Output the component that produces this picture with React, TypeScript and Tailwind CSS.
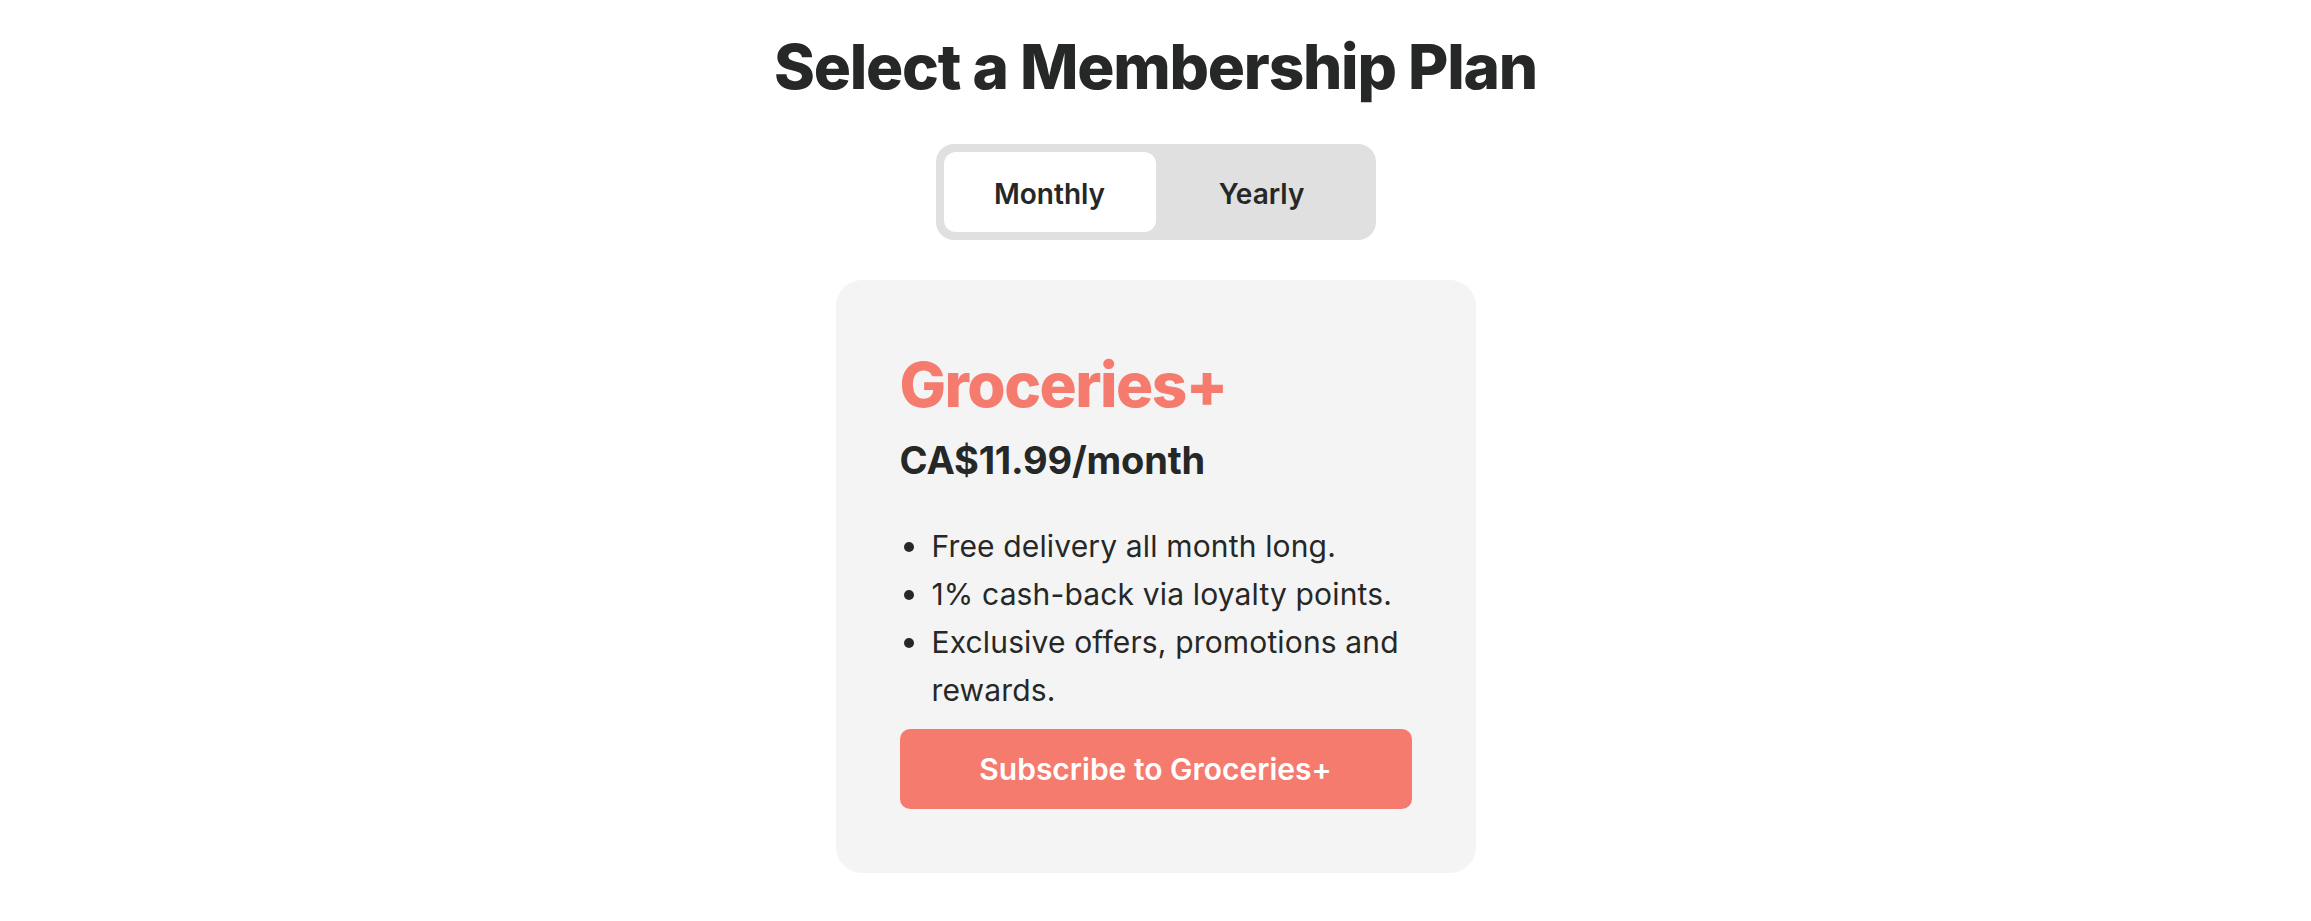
import React, { useState } from "react";

const features = [
  "Free delivery all month long.",
  "1% cash-back via loyalty points.",
  "Exclusive offers, promotions and rewards.",
];

export default function App() {
  const [period, setPeriod] = useState<"monthly" | "yearly">("monthly");

  return (
    <div className="min-h-screen bg-white flex flex-col items-center pt-[36px] text-[#262827] font-['Inter',sans-serif]">
      <h1 className="text-[62px] leading-none font-extrabold tracking-[-0.02em]">
        Select a Membership Plan
      </h1>

      {/* billing period toggle */}
      <div className="mt-[46px] flex p-2 rounded-[18px] bg-[#e0e0e0]">
        <button
          onClick={() => setPeriod("monthly")}
          className={`w-[212px] h-[80px] pt-[3px] rounded-[12px] text-[28px] font-semibold ${period === "monthly" ? "bg-white" : ""}`}
        >
          Monthly
        </button>
        <button
          onClick={() => setPeriod("yearly")}
          className={`w-[212px] h-[80px] pt-[3px] rounded-[12px] text-[28px] font-semibold ${period === "yearly" ? "bg-white" : ""}`}
        >
          Yearly
        </button>
      </div>

      {/* plan card */}
      <div className="mt-[40px] w-[640px] bg-[#f4f4f4] rounded-[26px] pt-[74px] px-16 pb-16">
        <h2 className="text-[62px] leading-none font-extrabold tracking-[-0.025em] text-[#f67b6f]">
          Groceries+
        </h2>
        <div className="mt-[25px] text-[38px] leading-none font-bold tracking-[-0.005em]">
          {period === "monthly" ? "CA$11.99/month" : "CA$119.99/year"}
        </div>
        <ul className="mt-[43px] text-[30px] leading-[48px] tracking-[0.005em]">
          {features.map((f) => (
            <li key={f} className="flex items-start">
              <span className="ml-[4px] mt-[20px] w-[10px] h-[10px] rounded-full bg-[#262827] shrink-0" />
              <span className="ml-[18px]">{f}</span>
            </li>
          ))}
        </ul>
        <button className="mt-[15px] w-full h-[80px] rounded-[10px] bg-[#f67b6f] text-white text-[30px] font-semibold">
          Subscribe to Groceries+
        </button>
      </div>
    </div>
  );
}
